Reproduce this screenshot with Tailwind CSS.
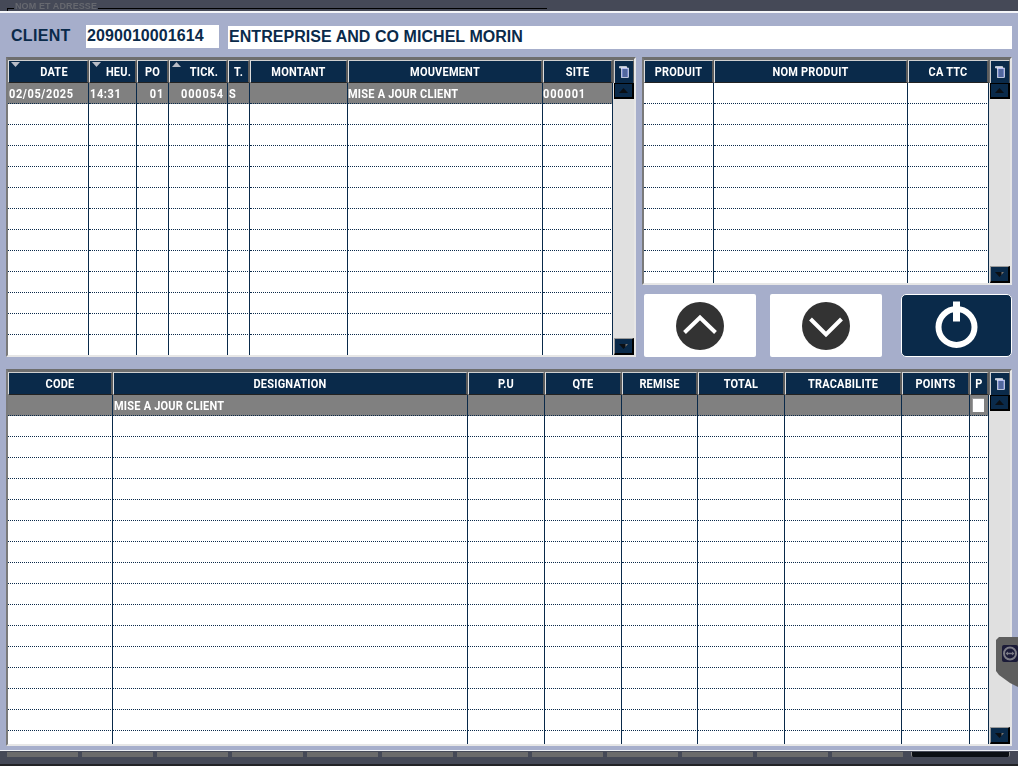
<!DOCTYPE html>
<html lang="fr">
<head>
    <meta charset="UTF-8">
    <title>Client</title>
    <script src="https://cdn.jsdelivr.net/npm/@tailwindcss/browser@4"></script>
</head>
<body class="w-[1018px] h-[766px] overflow-hidden bg-[#a6aecb] flex flex-col relative font-['Roboto',sans-serif]">

    <!-- barre du haut -->
    <div class="h-[11px] shrink-0 bg-[#454957] relative overflow-hidden">
        <div class="absolute left-[7px] top-[8px] w-[540px] h-px bg-black"></div>
        <div class="absolute left-[7px] top-[8px] w-px h-[3px] bg-black"></div>
        <span class="absolute left-[14px] top-[2px] px-px bg-[#454957] text-[9px] leading-[9px] font-bold font-['Liberation_Sans',sans-serif] text-[#66686f] tracking-[0.1px] blur-[0.5px]">NOM ET ADRESSE</span>
    </div>
    <div class="h-[2px] shrink-0 bg-[#f4f5f9]"></div>

    <main class="h-[737px] shrink-0 flex flex-col pl-[6px] pr-[6px]">
        <!-- entete client -->
        <div class="h-[44px] pt-[12px] flex items-start font-['Liberation_Sans',sans-serif] font-bold text-[#0a2a4a]">
            <span class="w-[80px] pl-[5px] h-[23px] leading-[22px] text-[16px] tracking-[0.3px]">CLIENT</span>
            <div class="w-[133px] h-[23px] bg-white pl-[1px] leading-[22px] text-[16px] tracking-[0.08px]">2090010001614</div>
            <div class="ml-[9px] mt-px w-[784px] h-[23px] bg-white pl-[1px] leading-[22px] text-[16px] tracking-[0.05px]">ENTREPRISE AND CO MICHEL MORIN</div>
        </div>

        <div class="flex gap-[6px] h-[300px]">
            <div id="t1" class="w-[630px] h-[300px]"></div>
            <div class="w-[370px] flex flex-col">
                <div id="t2" class="h-[228px]"></div>
                <div class="mt-[9px] pl-[2px] flex items-start">
                    <button class="w-[112px] h-[63px] bg-white rounded-[2px] flex items-center justify-center">
                        <svg width="50" height="50" viewBox="0 0 50 50"><circle cx="25" cy="25" r="24" fill="#333333"/><path d="M9.5 31.5 25 16.5 40.5 31.5" fill="none" stroke="#fff" stroke-width="4"/></svg>
                    </button>
                    <button class="ml-[14px] w-[112px] h-[63px] bg-white rounded-[2px] flex items-center justify-center">
                        <svg width="50" height="50" viewBox="0 0 50 50"><circle cx="25" cy="25" r="24" fill="#333333"/><path d="M9.5 18 25 33.5 40.5 18" fill="none" stroke="#fff" stroke-width="4"/></svg>
                    </button>
                    <button class="ml-[19px] w-[111px] h-[63px] bg-[#0a2a4a] border border-white rounded-[5px] flex items-center justify-center">
                        <svg width="50" height="52" viewBox="0 0 50 52"><circle cx="24.5" cy="27" r="18" fill="none" stroke="#fff" stroke-width="6"/><rect x="21" y="1.5" width="7" height="20" fill="#fff"/></svg>
                    </button>
                </div>
            </div>
        </div>

        <div id="t3" class="mt-[12px] h-[377px] w-[1006px]"></div>
    </main>

    <!-- barre du bas -->
    <div class="absolute left-0 right-0 top-[750px] h-[16px] bg-[#454957] border-t border-[#eceef4] overflow-hidden">
        <div class="h-[1px] bg-[#454957]"></div>
        <div class="flex h-[5px] pl-[7px] gap-[4px]">
            <div class="w-[71px] bg-[#6b6b6b]"></div><div class="w-[71px] bg-[#6b6b6b]"></div><div class="w-[71px] bg-[#6b6b6b]"></div>
            <div class="w-[71px] bg-[#6b6b6b]"></div><div class="w-[71px] bg-[#6b6b6b]"></div><div class="w-[71px] bg-[#6b6b6b]"></div>
            <div class="w-[71px] bg-[#6b6b6b]"></div><div class="w-[71px] bg-[#6b6b6b]"></div><div class="w-[71px] bg-[#6b6b6b]"></div>
            <div class="w-[71px] bg-[#6b6b6b]"></div><div class="w-[71px] bg-[#6b6b6b]"></div><div class="w-[71px] bg-[#6b6b6b]"></div>
        </div>
        <div class="absolute left-[911px] top-[1px] w-[99px] h-[5px] bg-[#0b0f14] border-x border-[#8a8a8a] rounded-b-[2px]"></div>
        <div class="absolute left-0 right-0 bottom-0 h-[2px] bg-[#222326]"></div>
    </div>

    <!-- onglet de prise en main -->
    <div class="absolute left-[996px] top-[637px] w-[22px] h-[50px] bg-[#5e5e5e] [clip-path:polygon(3px_0,100%_0,100%_100%,14px_46px,3px_38px,0_34px,0_3px)]">
        <svg class="absolute left-[6px] top-[8px]" width="16" height="17" viewBox="0 0 16 17">
            <rect width="16" height="17" rx="2" fill="#1b1b38"/>
            <circle cx="8" cy="8.5" r="6" fill="none" stroke="#7c7c86" stroke-width="2"/>
            <path d="M3.5 8.5 6 6.5V7.7H10V6.5L12.5 8.5 10 10.5V9.3H6V10.5Z" fill="#7c7c86"/>
        </svg>
    </div>

    <script>
        const icone = '<svg width="10" height="12" viewBox="0 0 10 12"><path d="M0.5 0.5H7.5V2H0.5Z" fill="#a6aecb" stroke="#fff" stroke-width="0.6"/><rect x="2.5" y="2" width="7" height="9.5" fill="#9aa6f0" stroke="#fff" stroke-width="0.6"/><path d="M3.5 4H8.5M3.5 6H8.5M3.5 8H8.5M3.5 10H8.5" stroke="#0a2a4a" stroke-width="1"/></svg>';
        const triHaut = '<svg width="9" height="5" viewBox="0 0 9 5"><path d="M4.5 0 9 5H0Z" fill="#0b0f14"/></svg>';
        const triBas = '<svg width="9" height="5" viewBox="0 0 9 5"><path d="M0 0H9L4.5 5Z" fill="#0b0f14"/><path d="M6.5 3 9 0H6.5Z" fill="#777"/></svg>';

        const tables = {
            t1: {
                tpl: 'grid-cols-[81px_48px_32px_59px_22px_98px_195px_70px]', lignes: 13,
                cols: ['DATE', 'HEU.', 'PO', 'TICK.', 'T.', 'MONTANT', 'MOUVEMENT', 'SITE'],
                tri: { 0: 'bas', 1: 'bas', 3: 'haut' },
                sel: ['02/05/2025', '14:31', '01', '000054', 'S', '', 'MISE A JOUR CLIENT', '000001'],
                align: ['text-left tracking-[0.6px]', 'text-left tracking-[0.6px]', 'text-right pr-[4px] tracking-[0.8px]', 'text-right pr-[3px] tracking-[0.85px]', 'text-left', 'text-left', 'text-left pl-0! tracking-[0.22px]', 'text-left pl-0! tracking-[0.85px]']
            },
            t2: {
                tpl: 'grid-cols-[70px_194px_81px]', lignes: 10,
                cols: ['PRODUIT', 'NOM PRODUIT', 'CA TTC'], tri: {}, sel: null, align: []
            },
            t3: {
                tpl: 'grid-cols-[105px_355px_77px_77px_76px_87px_117px_68px_19px]', lignes: 17,
                cols: ['CODE', 'DESIGNATION', 'P.U', 'QTE', 'REMISE', 'TOTAL', 'TRACABILITE', 'POINTS', 'P'], tri: {},
                sel: ['', 'MISE A JOUR CLIENT', '', '', '', '', '', '', ''],
                align: ['text-left', 'text-left tracking-[0.22px]', 'text-left', 'text-left', 'text-left', 'text-left', 'text-left', 'text-left', 'text-left'],
                coche: 8
            }
        };

        function construire(id, t) {
            let entete = '';
            t.cols.forEach((c, i) => {
                let tri = '';
                if (t.tri[i] === 'bas') tri = '<svg class="absolute left-[2px] top-[1px]" width="9" height="5" viewBox="0 0 9 5"><path d="M0 0H9L4.5 5Z" fill="#b8bcc6"/></svg>';
                if (t.tri[i] === 'haut') tri = '<svg class="absolute left-[2px] top-[1px]" width="9" height="5" viewBox="0 0 9 5"><path d="M4.5 0 9 5H0Z" fill="#b8bcc6"/></svg>';
                const libelle = '<span class="inline-block scale-y-[1.15]">' + c + '</span>';
                entete += '<div class="relative h-[23px] bg-[#0a2a4a] border-l border-t border-l-[#dcdcdc] border-t-[#cfcfcf] border-r-2 border-r-[#5c5c5c] border-b border-b-[#222] text-white text-[11px] font-bold leading-[21px] text-center tracking-[0.2px]">' + tri + (t.tri[i] ? '<span class="pl-[12px]">' + libelle + '</span>' : libelle) + '</div>';
            });

            let corps = '';
            for (let l = 0; l < t.lignes; l++) {
                t.cols.forEach((c, i) => {
                    const choisi = l === 0 && t.sel;
                    const fond = choisi ? 'bg-[#808080] text-white' : 'bg-white text-[#0a2a4a]';
                    let contenu = choisi && t.sel[i] ? '<span class="inline-block scale-y-[1.15]">' + t.sel[i] + '</span>' : '';
                    if (choisi && t.coche === i) contenu = '<span class="block mt-[3px] ml-[1px] w-[12px] h-[14px] bg-white border-t border-l border-[#9a9a9a]"></span>';
                    const al = choisi ? t.align[i] : '';
                    corps += '<div class="h-[21px] overflow-hidden border-r border-r-[#0a2a4a] border-b border-b-[#0a2a4a] [border-bottom-style:dotted] text-[11px] leading-[24px] font-bold pl-px ' + fond + ' ' + al + '">' + contenu + '</div>';
                });
            }

            document.getElementById(id).innerHTML =
                '<div class="h-full flex border-t-2 border-l-2 border-t-[#6e6e6e] border-l-[#7a7a7a] border-r-2 border-b-2 border-r-[#e6e6e6] border-b-[#e6e6e6] bg-white">' +
                    '<div class="flex-1 min-w-0 flex flex-col overflow-hidden">' +
                        '<div class="grid ' + t.tpl + ' bg-[#6e6e6e] pt-px">' + entete + '</div>' +
                        '<div class="grid ' + t.tpl + ' flex-1 overflow-hidden content-start">' + corps + '</div>' +
                    '</div>' +
                    '<div class="w-[21px] shrink-0 flex flex-col bg-[#e0e0e0]">' +
                        '<div class="h-[24px] bg-[#6e6e6e] pt-px pl-px">' +
                            '<div class="h-[23px] w-[20px] bg-[#0a2a4a] border-l border-t border-[#cfcfcf] border-r border-r-[#5c5c5c] flex items-center justify-center">' + icone + '</div>' +
                        '</div>' +
                        '<div class="ml-px w-[20px] h-[16px] bg-[#0a2a4a] border-t border-l border-black border-r-2 border-b-2 flex items-center justify-center">' + triHaut + '</div>' +
                        '<div class="flex-1"></div>' +
                        '<div class="ml-px w-[20px] h-[17px] bg-[#0a2a4a] border-t border-l border-[#9a9a9a] border-r-2 border-b-2 border-r-black border-b-black flex items-center justify-center">' + triBas + '</div>' +
                    '</div>' +
                '</div>';
        }

        Object.keys(tables).forEach(id => construire(id, tables[id]));
    </script>
</body>
</html>
